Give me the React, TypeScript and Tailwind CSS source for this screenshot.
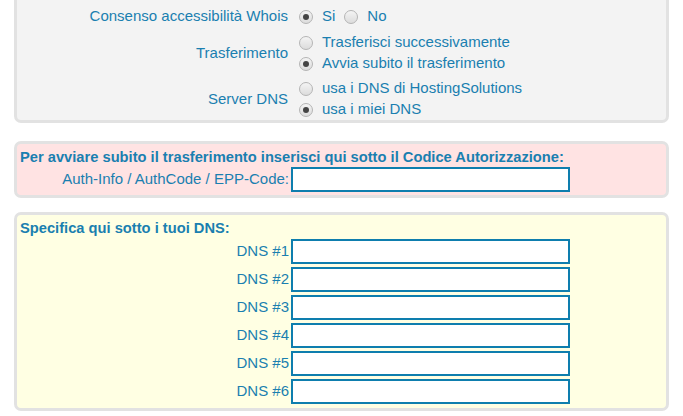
import type { ReactNode } from 'react';

const font = { fontFamily: '"Liberation Sans", Arial, sans-serif' };

function Radio({ checked }: { checked?: boolean }) {
  return (
    <span className="inline-flex h-[14px] w-[14px] shrink-0 items-center justify-center rounded-full border border-[#b5b5b5] bg-gradient-to-b from-[#f4f4f4] to-[#dcdcdc]">
      {checked && <span className="h-[6px] w-[6px] rounded-full bg-[#444]" />}
    </span>
  );
}

function Option({ checked, children }: { checked?: boolean; children: ReactNode }) {
  return (
    <label className="flex h-[21px] items-center gap-[9px]">
      <Radio checked={checked} />
      <span>{children}</span>
    </label>
  );
}

function Row({ label, children }: { label: string; children: ReactNode }) {
  return (
    <div className="flex items-center">
      <div className="w-[272px] shrink-0 pr-[1px] text-right">{label}</div>
      <div className="pl-[10px]">{children}</div>
    </div>
  );
}

function Field({ label }: { label: string }) {
  return (
    <div className="flex h-[28px] items-center">
      <div className="w-[272px] shrink-0 text-right">{label}</div>
      <input className="ml-[2px] h-[25px] w-[279px] border-2 border-[#0e7eae] bg-white outline-none" />
    </div>
  );
}

export default function App() {
  return (
    <div className="min-h-[416px] w-[683px] bg-white text-[15px] leading-tight text-[#1a7fb0]" style={font}>
      <div className="px-[14px]">
        {/* riepilogo opzioni */}
        <div className="rounded-b-[7px] border-x-[3px] border-b-[3px] border-[#e2e2e2] bg-[#f3f3f3] pt-[6px] pb-0">
          <Row label="Consenso accessibilità Whois">
            <div className="flex items-center gap-[9px]">
              <Option checked>Si</Option>
              <Option>No</Option>
            </div>
          </Row>
          <div className="h-[5px]" />
          <Row label="Trasferimento">
            <Option>Trasferisci successivamente</Option>
            <Option checked>Avvia subito il trasferimento</Option>
          </Row>
          <div className="h-[4px]" />
          <Row label="Server DNS">
            <Option>usa i DNS di HostingSolutions</Option>
            <Option checked>usa i miei DNS</Option>
          </Row>
        </div>

        {/* codice autorizzazione */}
        <div className="mt-[18px] rounded-[7px] border-[3px] border-[#e2e2e2] bg-[#ffe3e3] pt-[4px] pb-[3px]">
          <div className="pl-[3px] text-[14.7px] font-bold">
            Per avviare subito il trasferimento inserisci qui sotto il Codice Autorizzazione:
          </div>
          <div className="flex h-[26px] items-center">
            <div className="w-[272px] shrink-0 text-right">Auth-Info / AuthCode / EPP-Code:</div>
            <input className="ml-[2px] h-[25px] w-[279px] border-2 border-[#0e7eae] bg-white outline-none" />
          </div>
        </div>

        {/* DNS personalizzati */}
        <div className="mt-[14px] rounded-[7px] border-[3px] border-[#e2e2e2] bg-[#ffffe3] pt-[4px] pb-[2px]">
          <div className="pl-[3px] text-[14.7px] font-bold">Specifica qui sotto i tuoi DNS:</div>
          <div>
            {['DNS #1', 'DNS #2', 'DNS #3', 'DNS #4', 'DNS #5', 'DNS #6'].map((d) => (
              <Field key={d} label={d} />
            ))}
          </div>
        </div>
      </div>
    </div>
  );
}
